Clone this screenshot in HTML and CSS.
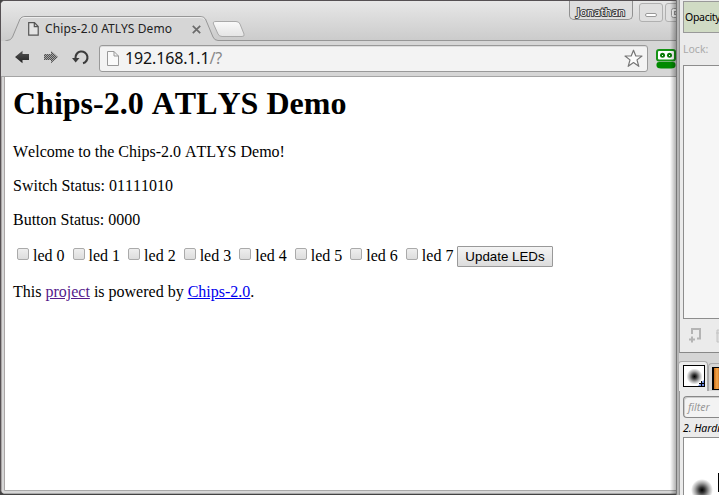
FILE: index.html
```html
<!DOCTYPE html>
<html lang="en">
<head>
<meta charset="utf-8">
<title>Chips-2.0 ATLYS Demo</title>
<link rel="stylesheet" href="styles.css">
</head>
<body>
<div class="desktop">
  <div class="browser">
    <div class="tabstrip">
      <svg class="tab-shape" width="676" height="40" viewBox="0 0 676 40">
        <defs><linearGradient id="nt" x1="0" y1="0" x2="0" y2="1"><stop offset="0" stop-color="#fafafa"/><stop offset="1" stop-color="#e4e4e4"/></linearGradient></defs>
        <path d="M3 40.5 Q9 40 11.500 36 L19 18 Q20.500 15.500 24 15.500 H199 Q203 15.500 204.500 18 L212 36 Q213.500 39.500 217 39.500 H676 V41 H3Z" fill="#d6d6d6"/>
        <path d="M3 43 Q3 39.500 6 39.500 Q10 39.500 11.500 36 L19 18 Q20.500 15.500 24 15.500 H199 Q203 15.500 204.500 18 L212 36 Q213.500 39.500 217 39.500 H676" fill="none" stroke="#969696"/>
        <path d="M20 18.500 Q21 16.500 24 16.500 H199 Q202 16.500 203.500 18.500" fill="none" stroke="#ededed"/>
        <path d="M215 20.500 H235 Q238 20.500 239 23 L243 33 Q244 35.500 241 35.500 H221 Q218 35.500 217 33 L212.500 23 Q211.500 20.500 215 20.500Z" fill="url(#nt)" stroke="#a9a9a9"/>
      </svg>
      <div class="tab">
        <svg width="11" height="14" viewBox="0 0 11 14"><path d="M.7.700H6.500L10.200 4.500V13.200H.7ZM6.300 1V4.700H10" fill="#e4e4e4" stroke="#555" stroke-width="1.200"/></svg>
        <span class="tab-title">Chips-2.0 ATLYS Demo</span>
        <svg class="close" width="9" height="9" viewBox="0 0 9 9"><path d="M.8.800L8.200 8.200M8.200.8L.8 8.200" stroke="#6b6b6b" stroke-width="1.700"/></svg>
      </div>
      <div class="user">Jonathan</div>
      <div class="winbtn"><svg width="22" height="17" viewBox="0 0 22 17"><rect x="5.500" y="9.500" width="11" height="3" rx="1.500" fill="#fff" stroke="#999"/></svg></div>
      <div class="winbtn max"><svg width="22" height="17" viewBox="0 0 22 17"><rect x="5.500" y="4.500" width="11" height="9" rx="2" fill="#fff" stroke="#999"/><rect x="8.500" y="7.500" width="5" height="3" fill="#ddd" stroke="#999"/></svg></div>
    </div>
    <div class="toolbar">
      <svg class="nav" width="80" height="18" viewBox="0 0 80 18">
        <defs><pattern id="dots" width="2" height="2" patternUnits="userSpaceOnUse"><rect width="2" height="2" fill="#a5a5a5"/><rect width="1" height="1" fill="#505050"/><rect x="1" y="1" width="1" height="1" fill="#505050"/></pattern>
        <linearGradient id="bk" x1="0" y1="0" x2="0" y2="1"><stop offset="0" stop-color="#555"/><stop offset="1" stop-color="#222"/></linearGradient></defs>
        <path d="M0 9L7.500 2.700V6H14V12H7.500V15.300Z" fill="url(#bk)"/>
        <path d="M43 9L36 2.700V6H29V12H36V15.300Z" fill="url(#dots)"/>
        <path d="M60.500 11V10A6 6 0 1 1 68 15.300" fill="none" stroke="#3c3c3c" stroke-width="2.100"/>
        <path d="M57 10H64.500L60.700 14.500Z" fill="#3c3c3c"/>
      </svg>
      <div class="omnibox">
        <svg width="12" height="15" viewBox="0 0 12 15"><path d="M.5.500H7L11.500 5V14.500H.5ZM7 .5V5H11.500" fill="#fafafa" stroke="#999"/></svg>
        <span class="url">192.168.1.1<span class="path">/?</span></span>
        <svg class="star" width="19" height="19" viewBox="0 0 19 19"><path d="M9.500 1.200L11.800 7H18L13 10.900L14.800 17.300L9.500 13.600L4.200 17.300L6 10.900L1 7H7.200Z" fill="#fcfcfc" stroke="#777" stroke-width="1.200" stroke-linejoin="round"/></svg>
      </div>
      <svg class="robo" width="20" height="20" viewBox="0 0 20 20">
        <rect x="1" y="1" width="18" height="10.500" rx="2" fill="#fff" stroke="#159315" stroke-width="2"/>
        <circle cx="6.500" cy="6.300" r="2.500" fill="#087b08"/><circle cx="13.500" cy="6.300" r="2.500" fill="#087b08"/><path d="M6 6h1v1H6zM13 6h1v1h-1z" fill="#fff"/>
        <path d="M3 13H17Q19.500 13 19.500 15V17Q19 19.500 15 19.500H5Q1 19.500 .5 17V15Q.5 13 3 13Z" fill="#008a00"/>
      </svg>
    </div>
    <main class="page">
      <h1>Chips-2.0 ATLYS Demo</h1>
      <p>Welcome to the Chips-2.0 ATLYS Demo!</p>
      <p>Switch Status: 01111010</p>
      <p>Button Status: 0000</p>
      <form class="leds">
        <label><input type="checkbox">led 0</label>
        <label><input type="checkbox">led 1</label>
        <label><input type="checkbox">led 2</label>
        <label><input type="checkbox">led 3</label>
        <label><input type="checkbox">led 4</label>
        <label><input type="checkbox">led 5</label>
        <label><input type="checkbox">led 6</label>
        <label><input type="checkbox">led 7</label>
        <button type="button">Update LEDs</button>
      </form>
      <p>This <a class="visited" href="#">project</a> is powered by <a href="#">Chips-2.0</a>.</p>
    </main>
  </div>
  <aside class="dock">
    <section class="dock-top">
      <div class="opacity">Opacity</div>
      <div class="lock">Lock:</div>
      <div class="layers"></div>
      <svg class="actions" width="37" height="34" viewBox="0 0 37 34">
        <path d="M9 15V10H17V19.500H14" fill="none" stroke="#b4b4b4" stroke-width="2"/><path d="M6 20.500H12M9 17.500V23.500" stroke="#b4b4b4" stroke-width="2"/>
        <path d="M34 11h4v12h-4zM33 14h4" fill="#ddd" stroke="#c4c4c4"/>
      </svg>
    </section>
    <div class="dock-tabs">
      <div class="dtab on"><svg width="22" height="22" viewBox="0 0 22 22"><defs><radialGradient id="br"><stop offset="0" stop-color="#000"/><stop offset=".25" stop-color="#333"/><stop offset=".65" stop-color="#aaa"/><stop offset="1" stop-color="#fff"/></radialGradient></defs><rect x=".5" y=".5" width="21" height="21" fill="#fff" stroke="#000"/><circle cx="11.500" cy="11.500" r="8" fill="url(#br)"/><path d="M21 15V21H15Z" fill="#6f8be0"/><path d="M16 18.500h5M18.500 16v5" stroke="#000"/></svg></div>
      <div class="dtab"><i class="pattern"></i></div>
    </div>
    <section class="dock-bottom">
      <div class="filter">filter</div>
      <div class="brush">2. Hardness</div>
      <div class="brushes"><svg width="36" height="58" viewBox="0 0 36 58"><circle cx="18" cy="52" r="11" fill="url(#br)"/><path d="M34 35h2v19h-2z"/></svg></div>
    </section>
  </aside>
</div>
</body>
</html>
```
FILE: styles.css
```css
* { box-sizing: border-box; }
body { margin: 0; background: #444; overflow: hidden; }
svg { display: block; flex: none; }
.desktop { display: grid; grid-template-columns: 676px 43px; width: 719px; height: 495px; overflow: hidden; }

.browser {
  display: flex; flex-direction: column; height: 494px; overflow: hidden; position: relative;
  border-top: 1px solid #555053; border-left: 1px solid #555053;
  border-radius: 5px 0 0 5px; background: #d6d6d6;
}
.browser::after {
  content: ""; position: absolute; right: 0; top: 0; bottom: 0; width: 6px;
  background: linear-gradient(to right, rgba(0,0,0,0), rgba(0,0,0,.3));
}
.tabstrip {
  display: flex; flex: none; height: 40px; position: relative; align-items: flex-start; overflow: hidden;
  background: linear-gradient(#e7e7e7, #cbcbcb);
}
.tab-shape { position: absolute; left: 0; top: 0; }
.tab { position: relative; display: flex; flex: none; align-items: center; height: 24px; margin: 16px 0 0 27px; width: 173px; font: 12px "Noto Sans", sans-serif; color: #222; }
.tab-title { margin: -1px 0 0 6px; white-space: nowrap; letter-spacing: .1px; }
.close { margin-left: auto; }
.user {
  position: relative; flex: none; width: 64px; height: 19px; margin: 0 0 0 368px; border: 1px solid #919191; border-top: 0;
  border-radius: 0 0 5px 5px; font: 11.500px/21px "Noto Sans", sans-serif; text-align: center; color: #fff;
  background: #dedede; -webkit-text-stroke: 2px #444; paint-order: stroke fill;
}
.winbtn { position: relative; flex: none; width: 24px; height: 19px; margin: 2px 0 0 6px; border: 1px solid #b0b0b0; border-radius: 3px; background: #dfdfdf; }
.winbtn.max { margin-left: 2px; }

.toolbar { display: flex; flex: none; align-items: center; height: 36px; padding-left: 14px; border-bottom: 1px solid #a5a5a5; background: #d6d6d6; }
.nav { margin-top: -3px; }
.omnibox {
  display: flex; flex: none; align-items: center; width: 549px; height: 27px; margin-left: 4px; padding: 0 4px 0 7px;
  border: 1px solid #999; border-radius: 3px; background: #f3f3f3; box-shadow: inset 0 1px #ddd;
}
.url { margin: -1px 0 0 6px; font: 16px/24px "Noto Sans", sans-serif; letter-spacing: -.15px; color: #111; }
.path { color: #888; }
.star { margin-left: auto; }
.robo { margin-left: 8px; }

.page {
  flex: 1; padding: 0 8px; background: #fff; font: 16px "Liberation Serif", serif; font-kerning: none; color: #000;
  border-left: 4px double #aaa6a6; border-bottom: 4px double #aaa; background-clip: padding-box;
}
.page h1 { margin: 8px 0 21px; font-size: 32px; line-height: 37px; }
.page p { margin: 0 0 16px; line-height: 18px; }
.leds { display: flex; align-items: center; height: 22px; margin: 16px 0; white-space: nowrap; }
.leds label { display: flex; align-items: center; width: 55.550px; height: 19px; margin-top: -2px; line-height: 19px; }
.leds input { appearance: none; width: 12px; height: 12px; margin: -2px 4px 0; border: 1px solid #aaa; border-radius: 2px; background: linear-gradient(#eee, #ddd); }
.leds button { width: 96px; height: 21px; margin: 1px 0 0 -.4px; padding: 0; border: 1px solid #999; border-radius: 1px; background: linear-gradient(#f4f4f4, #dcdcdc); font: 13.333px "Liberation Sans", sans-serif; color: #000; }
.page a { color: #00e; }
.page a.visited { color: #551a8b; }

.dock { height: 495px; overflow: hidden; border-left: 1px solid #777; background: #d5d5d5; box-shadow: inset 2px 0 #b5b5b5; font: 11px "Noto Sans", sans-serif; }
.dock-top { height: 353px; margin-left: 2px; padding: 1px 0 0 3px; border-left: 1px solid #999; border-bottom: 1px solid #888; background: #ebebeb; }
.opacity { height: 32px; padding-left: 1px; border: 1px solid #999; border-right: 0; background: #d0dbc4; line-height: 30px; white-space: nowrap; font-size: 10.500px; letter-spacing: -.3px; }
.lock { height: 32px; line-height: 32px; font-size: 10.500px; color: #aaa; }
.layers { height: 254px; border: 1px solid #8d8d8d; border-right: 0; background: #f6f6f6; }
.dock-tabs { display: flex; align-items: flex-end; height: 38px; margin-left: 1px; }
.dtab { flex: none; width: 29px; height: 28px; padding: 3px 0 0 3px; border: 1px solid #aaa; border-bottom: 0; border-radius: 4px 4px 0 0; background: #d5d5d5; }
.dtab.on { width: 30px; height: 30px; padding-left: 4px; background: #ebebeb; }
.pattern { display: block; width: 20px; height: 23px; border: 1px solid #000; border-left-width: 2px; background: linear-gradient(to right, #c56b19, #f6a84c 3px, #c56b19 6px); }
.dock-bottom { height: 104px; margin-left: 2px; padding: 5px 0 0 3px; border-left: 1px solid #999; background: #ebebeb; }
.filter { height: 22px; padding-left: 4px; border: 1px solid #888; border-right: 0; border-radius: 4px 0 0 4px; background: #f3f3f3; box-shadow: inset 1px 1px #ccc; line-height: 20px; font-size: 10.500px; font-style: italic; color: #999; }
.brush { height: 19px; line-height: 20px; font-size: 10.500px; font-style: italic; white-space: nowrap; }
.brushes { height: 59px; border: 1px solid #8d8d8d; border-right: 0; background: #fff; }
```
